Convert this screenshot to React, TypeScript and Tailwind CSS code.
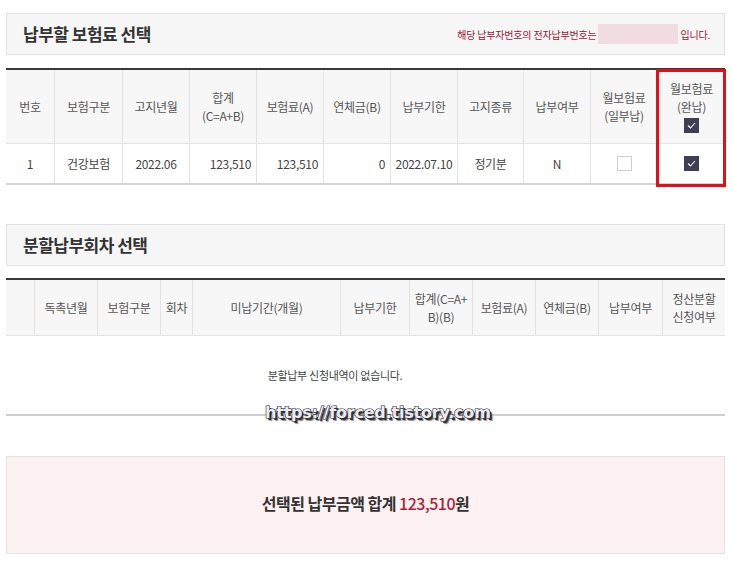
import React from 'react'

const font = {fontFamily: '"Noto Sans CJK KR", "Noto Sans", sans-serif'}

function Check({on}: {on: boolean}) {
  if (!on) {
    return <span className="inline-block w-[15px] h-[15px] border border-[#cfcfcf] bg-white" />
  }
  return (
    <span className="inline-flex w-[15px] h-[15px] bg-[#3e4052] items-center justify-center">
      <svg width="9" height="7" viewBox="0 0 9 7" fill="none">
        <path d="M1 3.5 L3.5 6 L8 1" stroke="#ffffff" strokeWidth="1.1" />
      </svg>
    </span>
  )
}

function SectionTitle({title, children}: {title: string; children?: React.ReactNode}) {
  return (
    <div className="h-[42px] border border-[#e2e2e2] bg-[#f6f6f6] flex items-center justify-between pl-[16px] pr-[14px]">
      <div className="text-[17px] font-bold text-[#333] tracking-[-0.5px]">{title}</div>
      {children}
    </div>
  )
}

const th = 'flex flex-col items-center justify-center text-center border-l border-[#e3e3e3] text-[12px] leading-[18px] text-[#555] tracking-[-0.3px]'
const td = 'flex items-center border-l border-[#e3e3e3] text-[12px] text-[#444] tracking-[-0.3px]'

export default function App() {
  return (
    <div className="relative w-[733px] h-[563px] bg-white" style={font}>
      <div className="w-[719px] ml-[6px] pt-[13px] flex flex-col">
        <SectionTitle title="납부할 보험료 선택">
          <div className="flex items-center text-[10px] text-[#9c1838] tracking-[-0.2px]">
            <span>해당 납부자번호의 전자납부번호는</span>
            <span className="ml-[2px] mr-[2px] w-[80px] h-[20px] bg-[#f0dde2]" />
            <span>입니다.</span>
          </div>
        </SectionTitle>

        <div className="relative mt-[13px] border-t-2 border-[#3a3a3a] border-b-2 border-b-[#d4d4d4]">
          <div className="grid grid-cols-[48px_68px_67px_67px_67px_67px_67px_66px_67px_67px_68px] h-[74px] bg-[#f7f7f7] border-b border-[#e3e3e3]">
            <div className={th + ' border-l-0'}>번호</div>
            <div className={th}>보험구분</div>
            <div className={th}>고지년월</div>
            <div className={th}>
              <span>합계</span>
              <span>(C=A+B)</span>
            </div>
            <div className={th}>보험료(A)</div>
            <div className={th}>연체금(B)</div>
            <div className={th}>납부기한</div>
            <div className={th}>고지종류</div>
            <div className={th}>납부여부</div>
            <div className={th}>
              <span>월보험료</span>
              <span>(일부납)</span>
            </div>
            <div className={th}>
              <span>월보험료</span>
              <span>(완납)</span>
              <span className="mt-[2px] flex"><Check on /></span>
            </div>
          </div>
          <div className="grid grid-cols-[48px_68px_67px_67px_67px_67px_67px_66px_67px_67px_68px] h-[39px] bg-white">
            <div className={td + ' border-l-0 justify-center'}>1</div>
            <div className={td + ' justify-center'}>건강보험</div>
            <div className={td + ' justify-center'}>2022.06</div>
            <div className={td + ' justify-end pr-[5px]'}>123,510</div>
            <div className={td + ' justify-end pr-[5px]'}>123,510</div>
            <div className={td + ' justify-end pr-[5px]'}>0</div>
            <div className={td + ' justify-center'}>2022.07.10</div>
            <div className={td + ' justify-center'}>정기분</div>
            <div className={td + ' justify-center'}>N</div>
            <div className={td + ' justify-center'}><Check on={false} /></div>
            <div className={td + ' justify-center'}><Check on /></div>
          </div>
          <div className="absolute right-[-1px] top-[-1px] w-[70px] h-[118px] border-[3px] border-[#e0101a]" />
        </div>

        <div className="mt-[39px]">
          <SectionTitle title="분할납부회차 선택" />
        </div>

        <div className="mt-[12px] border-t-2 border-[#3a3a3a] border-b-2 border-b-[#cfcfcf]">
          <div className="grid grid-cols-[28px_63px_63px_32px_148px_69px_63px_63px_63px_64px_63px] h-[56px] bg-[#f7f7f7] border-b border-[#e3e3e3]">
            <div className={th + ' border-l-0'} />
            <div className={th}>독촉년월</div>
            <div className={th}>보험구분</div>
            <div className={th}>회차</div>
            <div className={th}>미납기간(개월)</div>
            <div className={th}>납부기한</div>
            <div className={th}>
              <span>합계(C=A+</span>
              <span>B)(B)</span>
            </div>
            <div className={th}>보험료(A)</div>
            <div className={th}>연체금(B)</div>
            <div className={th}>납부여부</div>
            <div className={th}>
              <span>정산분할</span>
              <span>신청여부</span>
            </div>
          </div>
          <div className="h-[78px] flex items-end justify-center pb-[31px] pr-[61px] text-[11px] text-[#444] tracking-[-0.3px]">
            분할납부 신청내역이 없습니다.
          </div>
        </div>

        <div className="mt-[40px] h-[98px] border border-[#e4e4e4] bg-[#fdf1f2] flex items-center justify-center pb-[4px] text-[16px] font-bold text-[#333] tracking-[-0.5px]">
          <span>선택된 납부금액 합계&nbsp;</span>
          <span className="text-[#b31b34] font-medium">123,510</span>
          <span>원</span>
        </div>
      </div>

      <div
        className="absolute left-[265px] top-[403px] text-[16px] leading-[20px] font-bold text-[#ecebf5] tracking-[-0.2px]"
        style={{
          fontFamily: '"DejaVu Sans", sans-serif',
          WebkitTextStroke: '1.2px #24242e',
          paintOrder: 'stroke fill',
          textShadow: '2px 2px 0 #333, 3px 3px 1px #888',
        }}
      >
        https://forced.tistory.com
      </div>
    </div>
  )
}
